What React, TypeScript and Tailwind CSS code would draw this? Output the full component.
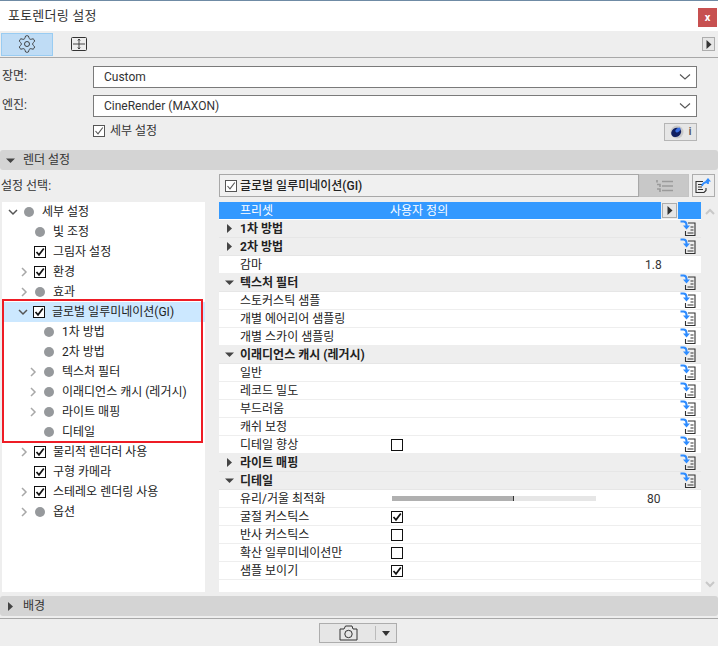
import type { ReactNode } from 'react'

const FONT = "font-['Roboto','Noto_Sans_CJK_KR',sans-serif]"

function CheckBox({ checked, soft }: { checked: boolean; soft?: boolean }) {
	return (
		<span
			className={`flex h-[12px] w-[12px] shrink-0 items-center justify-center border bg-white ${soft ? 'border-[#555555]' : 'border-[#111111]'}`}
		>
			{checked && (
				<svg width="10" height="10" viewBox="0 0 10 10" fill="none">
					<path
						d="M1.5 5 L4 7.8 L8.8 1.5"
						stroke={soft ? '#555555' : '#111111'}
						strokeWidth={soft ? 1.1 : 1.7}
					/>
				</svg>
			)}
		</span>
	)
}

function Dot() {
	return <span className="h-[10px] w-[10px] shrink-0 rounded-full bg-[#96999c]" />
}

function TreeArrow({ open }: { open?: boolean }) {
	return (
		<svg width="10" height="10" viewBox="0 0 10 10" fill="none" className="shrink-0">
			{open ? (
				<path d="M1 3 L5 7 L9 3" stroke="#555555" strokeWidth="1.5" />
			) : (
				<path d="M3 1 L7 5 L3 9" stroke="#a8a8a8" strokeWidth="1.5" />
			)}
		</svg>
	)
}

function Triangle({ open }: { open?: boolean }) {
	return (
		<svg width="9" height="9" viewBox="0 0 9 9" className="shrink-0">
			{open ? <path d="M0 2.5 H9 L4.5 7 Z" fill="#444444" /> : <path d="M2 0 L7 4.5 L2 9 Z" fill="#444444" />}
		</svg>
	)
}

function Caret() {
	return (
		<svg width="12" height="8" viewBox="0 0 12 8" fill="none">
			<path d="M1 1.5 L6 6 L11 1.5" stroke="#555555" strokeWidth="1.1" />
		</svg>
	)
}

function PlayButton({ className }: { className?: string }) {
	return (
		<span className={`flex h-[14px] w-[14px] items-center justify-center border border-[#adadad] bg-[#e6e6e6] ${className ?? ''}`}>
			<svg width="6" height="9" viewBox="0 0 6 9">
				<path d="M0.5 0 L5.5 4.5 L0.5 9 Z" fill="#333333" />
			</svg>
		</span>
	)
}

function OverrideIcon() {
	return (
		<svg width="16" height="17" viewBox="0 0 16 17" fill="none" className="shrink-0">
			<path d="M8 3 H15 V15.5 H5.5 V11" stroke="#333333" strokeWidth="1.1" />
			<path d="M10.5 7 H13.5 M10.5 10 H13.5 M7.5 13 H13.5" stroke="#333333" strokeWidth="1.1" />
			<path d="M0.5 1.5 H3.5 Q6.5 1.5 6.5 5 V6" stroke="#2e8cff" strokeWidth="2" />
			<path d="M3 5.5 H10 L6.5 9.5 Z" fill="#2e8cff" />
		</svg>
	)
}

function Row({ children, value, icon = true }: { children: ReactNode; value?: ReactNode; icon?: boolean }) {
	return (
		<div className="flex h-[18px] items-center border-b border-[#eeeeee] bg-white pr-[5px] pl-[21px]">
			<span className="w-[150px] shrink-0 text-[#222222]">{children}</span>
			<div className="flex min-w-0 flex-1 items-center">{value}</div>
			<span className="w-[16px] shrink-0">{icon && <OverrideIcon />}</span>
		</div>
	)
}

function GroupRow({ label, open }: { label: string; open?: boolean }) {
	return (
		<div className="flex h-[18px] items-center border-b border-[#e6e6e6] bg-[#eeeeee] pr-[5px] pl-[6px]">
			<span className="flex w-[15px] shrink-0">
				<Triangle open={open} />
			</span>
			<span className="flex-1 font-bold text-[#222222]">{label}</span>
			<OverrideIcon />
		</div>
	)
}

function TreeRow({
	label,
	indent,
	arrow,
	open,
	kind,
	selected,
}: {
	label: string
	indent: string
	arrow?: boolean
	open?: boolean
	kind: 'dot' | 'check'
	selected?: boolean
}) {
	return (
		<div className={`flex h-[20px] items-center ${indent} ${selected ? 'bg-[#cce8ff]' : ''}`}>
			<span className="flex w-[15px] shrink-0">{arrow && <TreeArrow open={open} />}</span>
			<span className="flex w-[12px] shrink-0 justify-center">{kind === 'dot' ? <Dot /> : <CheckBox checked />}</span>
			<span className="ml-[7px] whitespace-nowrap text-[#222222]">{label}</span>
		</div>
	)
}

function SelectBox({ text }: { text: string }) {
	return (
		<div className="flex h-[22px] flex-1 items-center justify-between border border-[#7a7a7a] bg-white pr-[5px] pl-[10px] text-[#333333]">
			<span>{text}</span>
			<Caret />
		</div>
	)
}

function SectionBar({ label, open }: { label: string; open?: boolean }) {
	return (
		<div className="flex h-[20px] items-center rounded-[3px] bg-[#d4d4d4] pl-[6px]">
			<span className="flex w-[17px] shrink-0">
				<Triangle open={open} />
			</span>
			<span className="text-[#333333]">{label}</span>
		</div>
	)
}

export default function App() {
	return (
		<div className={`${FONT} relative h-[646px] w-[718px] overflow-hidden bg-[#eeeeee] text-[12px] leading-none`}>
			{/* Title bar */}
			<div className="flex h-[31px] items-start justify-between border-t border-[#6f8ba5] bg-white pl-[8px]">
				<span className="mt-[8px] text-[13px] tracking-[0.2px] text-[#333333]">포토렌더링 설정</span>
				<span className="mt-[7px] mr-[1px] flex h-[19px] w-[19px] items-center justify-center bg-[#c75050] text-[11px] font-bold text-white">
					x
				</span>
			</div>

			{/* Toolbar */}
			<div className="flex h-[27px] items-center border-b border-[#a8a8a8] pr-[1px] pl-[1px]">
				<div className="flex h-[23px] w-[52px] items-center justify-center border border-[#99ccf2] bg-[#bfdcf5]">
					<svg width="20" height="20" viewBox="0 0 24 24" fill="none" stroke="#333333" strokeWidth="1.1">
						<path d="M12.22 2h-.44a2 2 0 0 0-2 2v.18a2 2 0 0 1-1 1.73l-.43.25a2 2 0 0 1-2 0l-.15-.08a2 2 0 0 0-2.73.73l-.22.38a2 2 0 0 0 .73 2.73l.15.1a2 2 0 0 1 1 1.72v.51a2 2 0 0 1-1 1.74l-.15.09a2 2 0 0 0-.73 2.73l.22.38a2 2 0 0 0 2.73.73l.15-.08a2 2 0 0 1 2 0l.43.25a2 2 0 0 1 1 1.73V20a2 2 0 0 0 2 2h.44a2 2 0 0 0 2-2v-.18a2 2 0 0 1 1-1.73l.43-.25a2 2 0 0 1 2 0l.15.08a2 2 0 0 0 2.73-.73l.22-.39a2 2 0 0 0-.73-2.73l-.15-.08a2 2 0 0 1-1-1.74v-.5a2 2 0 0 1 1-1.74l.15-.09a2 2 0 0 0 .73-2.73l-.22-.38a2 2 0 0 0-2.73-.73l-.15.08a2 2 0 0 1-2 0l-.43-.25a2 2 0 0 1-1-1.73V4a2 2 0 0 0-2-2z" />
						<circle cx="12" cy="12" r="3" />
					</svg>
				</div>
				<div className="flex h-[23px] w-[52px] items-center justify-center">
					<svg width="16" height="14" viewBox="0 0 16 14" fill="none" stroke="#333333">
						<rect x="0.5" y="0.5" width="15" height="13" rx="1" />
						<path d="M8 2 V12 M2 7 H14 M6.8 3.5 L8 2 L9.2 3.5 M6.8 10.5 L8 12 L9.2 10.5" strokeWidth="0.9" />
					</svg>
				</div>
				<div className="flex-1" />
				<PlayButton className="mr-[2px] !h-[14px] !w-[13px]" />
			</div>

			{/* Scene and engine */}
			<div className="flex flex-col gap-[7px] pt-[8px] pr-[21px] pl-[2px]">
				<div className="flex items-center">
					<span className="mb-[2px] w-[91px] text-[#333333]">장면:</span>
					<SelectBox text="Custom" />
				</div>
				<div className="flex items-center">
					<span className="mb-[2px] w-[91px] text-[#333333]">엔진:</span>
					<SelectBox text="CineRender (MAXON)" />
				</div>
			</div>
			<div className="mt-[5px] flex h-[20px] items-center pr-[21px] pl-[93px]">
				<div className="mb-[2px] flex items-center">
					<CheckBox checked soft />
					<span className="ml-[5px] text-[#333333]">세부 설정</span>
				</div>
				<div className="flex-1" />
				<div className="flex h-[18px] w-[33px] items-center justify-center gap-[5px] border border-[#b5b5b5] bg-[#e6e6e6]">
					<svg width="14" height="14" viewBox="0 0 14 14" className="shrink-0">
						<circle cx="7" cy="7" r="6.5" fill="#c9c9c9" />
						<ellipse cx="6.2" cy="7.4" rx="5.2" ry="4.4" transform="rotate(-35 6.2 7.4)" fill="#101f60" />
						<ellipse cx="8" cy="5" rx="3" ry="1.8" transform="rotate(-35 8 5)" fill="#3a6ee0" />
					</svg>
					<span className="text-[10px] font-bold text-[#555555]">i</span>
				</div>
			</div>

			{/* Render settings */}
			<div className="mt-[8px]">
				<SectionBar label="렌더 설정" open />
			</div>
			<div className="mt-[4px] flex h-[23px] items-center pl-[1px]">
				<span className="w-[218px] text-[#333333]">설정 선택:</span>
				<div className="flex h-[23px] w-[420px] items-center border border-[#a8a8a8] bg-[#f0f0f0] pl-[5px]">
					<CheckBox checked soft />
					<span className="ml-[3px] font-medium text-[#222222]">글로벌 일루미네이션(GI)</span>
				</div>
				<div className="flex h-[23px] w-[50px] items-center justify-center border border-[#c4c4c4] bg-[#c8c8c8]">
					<svg width="17" height="12" viewBox="0 0 17 12" fill="none" stroke="#9a9a9a" strokeWidth="1.6">
						<path d="M6 1.5 H17 M6 6 H17 M6 10.5 H17 M1 0 V2.5 M1 4.5 H4 V7 M1 9 H4 V12" />
					</svg>
				</div>
				<div className="ml-[3px] flex h-[23px] w-[23px] items-center justify-center border border-[#adadad] bg-[#eeeeee]">
					<svg width="17" height="17" viewBox="0 0 17 17" fill="none">
						<path d="M8 4.5 H1 V15.5 H9 L11 13.5 V11" stroke="#333333" strokeWidth="1.1" />
						<path d="M3 7.5 H7 M3 10 H7 M3 12.5 H8" stroke="#333333" />
						<path d="M7 9 Q8 5 13 5 V7" stroke="#2e8cff" strokeWidth="1.8" />
						<path d="M10 4.5 L13 1 L16 4.5 Z" fill="#2e8cff" />
					</svg>
				</div>
			</div>

			{/* Tree and parameter table */}
			<div className="mt-[5px] flex h-[390px]">
				<div className="relative ml-[2px] h-full w-[203px] bg-white">
					<TreeRow label="세부 설정" indent="pl-[6px]" arrow open kind="dot" />
					<TreeRow label="빛 조정" indent="pl-[17px]" kind="dot" />
					<TreeRow label="그림자 설정" indent="pl-[17px]" kind="check" />
					<TreeRow label="환경" indent="pl-[17px]" arrow kind="check" />
					<TreeRow label="효과" indent="pl-[17px]" arrow kind="dot" />
					<TreeRow label="글로벌 일루미네이션(GI)" indent="pl-[16px]" arrow open kind="check" selected />
					<TreeRow label="1차 방법" indent="pl-[26px]" kind="dot" />
					<TreeRow label="2차 방법" indent="pl-[26px]" kind="dot" />
					<TreeRow label="텍스처 필터" indent="pl-[26px]" arrow kind="dot" />
					<TreeRow label="이래디언스 캐시 (레거시)" indent="pl-[26px]" arrow kind="dot" />
					<TreeRow label="라이트 매핑" indent="pl-[26px]" arrow kind="dot" />
					<TreeRow label="디테일" indent="pl-[26px]" kind="dot" />
					<TreeRow label="물리적 렌더러 사용" indent="pl-[17px]" arrow kind="check" />
					<TreeRow label="구형 카메라" indent="pl-[17px]" kind="check" />
					<TreeRow label="스테레오 렌더링 사용" indent="pl-[17px]" arrow kind="check" />
					<TreeRow label="옵션" indent="pl-[17px]" arrow kind="dot" />
					{/* annotation box laid over the tree */}
					<div className="absolute top-[97px] left-0 h-[144px] w-[201px] border-2 border-[#ee1c25]" />
				</div>

				<div className="ml-[14px] h-full w-[482px] bg-white">
					<div className="mb-[1px] flex h-[17px] items-center bg-[#3399ff] pl-[21px] text-white">
						<span className="w-[150px] shrink-0">프리셋</span>
						<span className="flex-1">사용자 정의</span>
						<span className="flex h-[17px] items-center bg-[#eeeeee] px-px">
							<PlayButton className="!h-[15px] !w-[15px]" />
						</span>
						<span className="w-[23px]" />
					</div>
					<GroupRow label="1차 방법" />
					<GroupRow label="2차 방법" />
					<Row icon={false} value={<span className="ml-[255px] text-[#333333]">1.8</span>}>
						감마
					</Row>
					<GroupRow label="텍스처 필터" open />
					<Row>스토커스틱 샘플</Row>
					<Row>개별 에어리어 샘플링</Row>
					<Row>개별 스카이 샘플링</Row>
					<GroupRow label="이래디언스 캐시 (레거시)" open />
					<Row>일반</Row>
					<Row>레코드 밀도</Row>
					<Row>부드러움</Row>
					<Row>캐쉬 보정</Row>
					<Row value={<span className="ml-[1px]"><CheckBox checked={false} /></span>}>디테일 향상</Row>
					<GroupRow label="라이트 매핑" />
					<GroupRow label="디테일" open />
					<Row
						icon={false}
						value={
							<div className="ml-[2px] flex items-center">
								<div className="flex h-[5px] w-[204px]">
									<div className="w-[121px] bg-[#b0b0b0]" />
									<div className="w-[1px] bg-[#333333]" />
									<div className="flex-1 bg-[#e6e6e6]" />
								</div>
								<span className="ml-[51px] text-[#333333]">80</span>
							</div>
						}
					>
						유리/거울 최적화
					</Row>
					<Row icon={false} value={<span className="ml-[1px]"><CheckBox checked /></span>}>굴절 커스틱스</Row>
					<Row icon={false} value={<span className="ml-[1px]"><CheckBox checked={false} /></span>}>반사 커스틱스</Row>
					<Row icon={false} value={<span className="ml-[1px]"><CheckBox checked={false} /></span>}>확산 일루미네이션만</Row>
					<Row icon={false} value={<span className="ml-[1px]"><CheckBox checked /></span>}>샘플 보이기</Row>
				</div>

				<div className="flex h-full flex-1 flex-col items-center justify-between pt-[6px] pb-[4px]">
					<svg width="10" height="7" viewBox="0 0 10 7" fill="none">
						<path d="M1 6 L5 2 L9 6" stroke="#c8c8c8" strokeWidth="2" />
					</svg>
					<svg width="10" height="7" viewBox="0 0 10 7" fill="none">
						<path d="M1 1 L5 5 L9 1" stroke="#c8c8c8" strokeWidth="2" />
					</svg>
				</div>
			</div>

			{/* Background section */}
			<div className="mt-[4px]">
				<SectionBar label="배경" />
			</div>

			{/* Footer */}
			<div className="mt-[2px] flex justify-center border-t border-[#a8a8a8] pt-[4px] pr-[2px]">
				<div className="flex h-[20px] w-[78px] items-center border border-[#adadad] bg-[#e6e6e6]">
					<span className="flex flex-1 justify-center pl-[2px]">
						<svg width="19" height="16" viewBox="0 0 19 16" fill="none" stroke="#333333">
							<path d="M1 4 H5 L6.5 1 H13 L14 4 H18 V15 H1 Z" />
							<circle cx="9.5" cy="9" r="3.7" />
						</svg>
					</span>
					<span className="h-[14px] w-px bg-[#bbbbbb]" />
					<span className="flex w-[20px] justify-center">
						<svg width="8" height="5" viewBox="0 0 8 5">
							<path d="M0 0 H8 L4 5 Z" fill="#333333" />
						</svg>
					</span>
				</div>
			</div>
		</div>
	)
}
